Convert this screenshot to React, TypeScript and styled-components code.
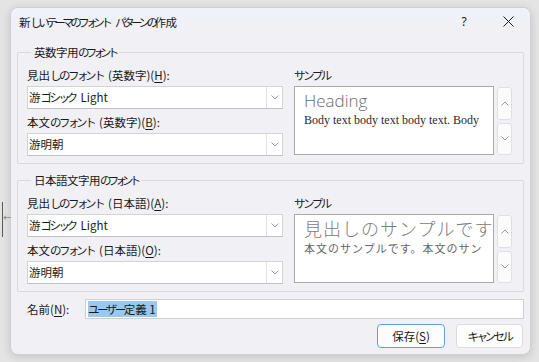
import React from 'react';
import styled, { createGlobalStyle } from 'styled-components';

const Global = createGlobalStyle`
  html, body { margin: 0; padding: 0; background: #e4e4e4; }
  body {
    font-family: "Noto Sans CJK JP", "Noto Sans", sans-serif;
    font-size: 11.5px;
    color: #1b1b1b;
  }
  #root { width: 539px; height: 362px; position: relative; overflow: hidden; }
`;

const SMALL = 'ぁぃぅぇぉっゃゅょゎァィゥェォッャュョヮ';
const KANA_RUN = /([\u3040-\u30ff]+)/;
const IS_KANA = /^[\u3040-\u30ff]+$/;

const Kana = styled.span<{ $small?: boolean; $last?: boolean }>`
  letter-spacing: ${(p) =>
    p.$last ? '0' : p.$small ? 'var(--kana-small, -3.5px)' : 'var(--kana, -2.5px)'};
`;

const J: React.FC<{ t: string }> = ({ t }) => {
  const parts = t.split(KANA_RUN).filter((s) => s.length > 0);
  return (
    <>
      {parts.map((part, i) => {
        if (!IS_KANA.test(part)) return <React.Fragment key={i}>{part}</React.Fragment>;
        const chars = Array.from(part);
        const next = parts[i + 1];
        const beforeGap = next !== undefined && /^[\s(]/.test(next);
        return chars.map((c, j) => (
          <Kana
            key={`${i}-${j}`}
            $small={SMALL.includes(c)}
            $last={beforeGap && j === chars.length - 1}
          >
            {c}
          </Kana>
        ));
      })}
    </>
  );
};

const Page = styled.div`
  width: 539px;
  height: 362px;
  box-sizing: border-box;
  padding: 7px 0 0 10px;
  position: relative;
`;

const EdgeGadget = styled.div`
  position: absolute;
  left: 0;
  top: 180px;
  width: 9px;
  height: 60px;
`;

const EdgeLine = styled.div`
  position: absolute;
  left: 2px;
  top: 22px;
  width: 1px;
  height: 35px;
  background: #5a5a5a;
`;

const EdgeArrow = styled.div`
  position: absolute;
  left: 3px;
  top: 32px;
  font-size: 10px;
  line-height: 12px;
  color: #8a8a8a;
  font-family: "DejaVu Sans", sans-serif;
`;

const Window = styled.div`
  width: 521px;
  height: 348px;
  box-sizing: border-box;
  border: 1px solid #cfcfcf;
  border-radius: 8px;
  background: #f1f0f5;
  box-shadow: 0 2px 10px rgba(0, 0, 0, 0.14);
  display: flex;
  flex-direction: column;
  overflow: hidden;
`;

const TitleBar = styled.div`
  height: 27px;
  display: flex;
  align-items: center;
  padding-left: 8px;
  background: linear-gradient(180deg, #eff2fa 0%, #f1f0f5 100%);
`;

const TitleText = styled.div`
  flex: 1;
  font-size: 11.5px;
  line-height: 16px;
  color: #1a1a1a;
  letter-spacing: -0.3px;
  --kana: -3.5px;
  --kana-small: -4.5px;
`;

const CaptionButton = styled.div`
  width: 44px;
  height: 26px;
  display: flex;
  align-items: center;
  justify-content: center;
  color: #1a1a1a;
  font-family: "Noto Sans", sans-serif;
  font-size: 12px;
`;

const Body = styled.div`
  flex: 1;
  display: flex;
  flex-direction: column;
  padding: 9px 6px 0 6px;
`;

const Group = styled.fieldset<{ $top?: number }>`
  margin: ${(p) => p.$top ?? 0}px 0 0 0;
  padding: 0 11px 7px 9px;
  border: 1px solid #dadada;
  border-radius: 2px;
  min-width: 0;
`;

const Legend = styled.legend`
  margin-left: 4px;
  padding: 0 3px;
  font-size: 11.5px;
  line-height: 16px;
  color: #1a1a1a;
  letter-spacing: -0.5px;
  --kana: -3.8px;
  --kana-small: -4.8px;
`;

const GroupGrid = styled.div`
  display: grid;
  grid-template-columns: 256px 1fr;
  column-gap: 11px;
`;

const Column = styled.div`
  display: flex;
  flex-direction: column;
`;

const FieldLabel = styled.div<{ $gap: number }>`
  margin-top: ${(p) => p.$gap}px;
  height: 18px;
  line-height: 18px;
  font-size: 11.5px;
  color: #1a1a1a;
  white-space: nowrap;
`;

const Key = styled.span`
  text-decoration: underline;
  text-underline-offset: 2px;
`;

const Combo = styled.div`
  margin-top: 2px;
  height: 23px;
  box-sizing: border-box;
  border: 1px solid #d4d4d4;
  border-bottom-color: #c2c2c2;
  background: #ffffff;
  display: flex;
  align-items: stretch;
`;

const ComboText = styled.div`
  flex: 1;
  padding-left: 1px;
  line-height: 21px;
  font-size: 11.5px;
  color: #1a1a1a;
  white-space: nowrap;
  overflow: hidden;
`;

const ComboArrow = styled.div`
  width: 15px;
  border-left: 1px solid #e2e2e2;
  display: flex;
  align-items: center;
  justify-content: center;
`;

const SampleRow = styled.div`
  margin-top: 2px;
  display: flex;
  gap: 3px;
  height: 69px;
`;

const SampleBox = styled.div`
  width: 200px;
  box-sizing: border-box;
  border: 1px solid #a9a9a9;
  background: #ffffff;
  padding: 3px 0 0 9px;
  overflow: hidden;
  white-space: nowrap;
`;

const SampleHeading = styled.div<{ $jp?: boolean }>`
  font-family: ${(p) =>
    p.$jp ? '"Noto Sans CJK JP", sans-serif' : '"Open Sans", "Noto Sans", sans-serif'};
  font-weight: 300;
  font-size: ${(p) => (p.$jp ? 18 : 17)}px;
  line-height: ${(p) => (p.$jp ? 21 : 22)}px;
  color: ${(p) => (p.$jp ? '#7c7c7c' : '#6c6c6c')};
  letter-spacing: ${(p) => (p.$jp ? '1px' : '0')};
`;

const SampleBody = styled.div<{ $jp?: boolean }>`
  font-family: ${(p) =>
    p.$jp ? '"Noto Sans CJK JP", sans-serif' : '"Liberation Serif", serif'};
  font-size: ${(p) => (p.$jp ? 11 : 12)}px;
  line-height: 16px;
  margin-top: ${(p) => (p.$jp ? 1 : 0)}px;
  color: ${(p) => (p.$jp ? '#666666' : '#2b2b2b')};
  letter-spacing: ${(p) => (p.$jp ? '1px' : '0')};
`;

const Spin = styled.div`
  width: 15px;
  padding-top: 1px;
  display: flex;
  flex-direction: column;
  gap: 3px;
`;

const SpinButton = styled.div`
  flex: 1;
  box-sizing: border-box;
  border: 1px solid #e0e0e0;
  border-radius: 3px;
  background: #fbfbfb;
  display: flex;
  align-items: center;
  justify-content: center;
`;

const NameRow = styled.div`
  margin-top: 7px;
  display: flex;
  align-items: center;
  padding-left: 10px;
  height: 20px;
`;

const NameLabel = styled.div`
  width: 58px;
  font-size: 11.5px;
  line-height: 20px;
  color: #1a1a1a;
`;

const NameInput = styled.div`
  flex: 1;
  height: 20px;
  box-sizing: border-box;
  border: 1px solid #cfcfcf;
  background: #ffffff;
  padding: 1px 0 1px 2px;
  display: flex;
`;

const Selection = styled.span`
  background: #99c9ef;
  color: #1a1a1a;
  line-height: 17px;
  font-size: 11.5px;
  padding-right: 1px;
`;

const ButtonRow = styled.div`
  margin-top: 5px;
  display: flex;
  justify-content: flex-end;
  gap: 11px;
  padding-right: 1px;
`;

const Button = styled.div<{ $primary?: boolean; $w: number }>`
  width: ${(p) => p.$w}px;
  height: 24px;
  box-sizing: border-box;
  border: 1px solid ${(p) => (p.$primary ? '#5ea0e0' : '#dcdcdc')};
  border-radius: 4px;
  background: #fdfdfd;
  display: flex;
  align-items: center;
  justify-content: center;
  font-size: 11.5px;
  color: #1a1a1a;
`;

const Chevron: React.FC<{ up?: boolean }> = ({ up }) => (
  <svg width="8" height="5" viewBox="0 0 8 5">
    <path
      d={up ? 'M0.5 4.5 L4 1 L7.5 4.5' : 'M0.5 0.5 L4 4 L7.5 0.5'}
      fill="none"
      stroke="#8a8a8a"
      strokeWidth="0.9"
    />
  </svg>
);

const CloseIcon = () => (
  <svg width="11" height="11" viewBox="0 0 11 11">
    <path d="M0.5 0.5 L10.5 10.5 M10.5 0.5 L0.5 10.5" stroke="#1a1a1a" strokeWidth="1" />
  </svg>
);

type FontGroupProps = {
  legend: string;
  headLabel: string;
  headKey: string;
  bodyLabel: string;
  bodyKey: string;
  headFont: string;
  bodyFont: string;
  sampleHead: string;
  sampleBody: string;
  jp?: boolean;
  top?: number;
};

const FontGroup: React.FC<FontGroupProps> = (p) => (
  <Group $top={p.top}>
    <Legend>
      <J t={p.legend} />
    </Legend>
    <GroupGrid>
      <Column>
        <FieldLabel $gap={6}>
          <J t={p.headLabel} />(<Key>{p.headKey}</Key>):
        </FieldLabel>
        <Combo>
          <ComboText>
            <J t={p.headFont} />
          </ComboText>
          <ComboArrow>
            <Chevron />
          </ComboArrow>
        </Combo>
        <FieldLabel $gap={4}>
          <J t={p.bodyLabel} />(<Key>{p.bodyKey}</Key>):
        </FieldLabel>
        <Combo>
          <ComboText>
            <J t={p.bodyFont} />
          </ComboText>
          <ComboArrow>
            <Chevron />
          </ComboArrow>
        </Combo>
      </Column>
      <Column>
        <FieldLabel $gap={6}>
          <J t="サンプル" />
        </FieldLabel>
        <SampleRow>
          <SampleBox>
            <SampleHeading $jp={p.jp}>{p.sampleHead}</SampleHeading>
            <SampleBody $jp={p.jp}>{p.sampleBody}</SampleBody>
          </SampleBox>
          <Spin>
            <SpinButton>
              <Chevron up />
            </SpinButton>
            <SpinButton>
              <Chevron />
            </SpinButton>
          </Spin>
        </SampleRow>
      </Column>
    </GroupGrid>
  </Group>
);

export default function App() {
  return (
    <>
      <Global />
      <Page>
        <EdgeGadget>
          <EdgeLine />
          <EdgeArrow>←</EdgeArrow>
        </EdgeGadget>
        <Window>
          <TitleBar>
            <TitleText>
              <J t="新しいテーマのフォント パターンの作成" />
            </TitleText>
            <CaptionButton>?</CaptionButton>
            <CaptionButton>
              <CloseIcon />
            </CaptionButton>
          </TitleBar>
          <Body>
            <FontGroup
              legend="英数字用のフォント"
              headLabel="見出しのフォント (英数字)"
              headKey="H"
              bodyLabel="本文のフォント (英数字)"
              bodyKey="B"
              headFont="游ゴシック Light"
              bodyFont="游明朝"
              sampleHead="Heading"
              sampleBody="Body text body text body text. Body"
            />
            <FontGroup
              top={8}
              legend="日本語文字用のフォント"
              headLabel="見出しのフォント (日本語)"
              headKey="A"
              bodyLabel="本文のフォント (日本語)"
              bodyKey="O"
              headFont="游ゴシック Light"
              bodyFont="游明朝"
              sampleHead="見出しのサンプルです"
              sampleBody="本文のサンプルです。本文のサン"
              jp
            />
            <NameRow>
              <NameLabel>
                名前(<Key>N</Key>):
              </NameLabel>
              <NameInput>
                <Selection>
                  <J t="ユーザー定義 1" />
                </Selection>
              </NameInput>
            </NameRow>
            <ButtonRow>
              <Button $primary $w={68}>
                保存(<Key>S</Key>)
              </Button>
              <Button $w={67}>
                <J t="キャンセル" />
              </Button>
            </ButtonRow>
          </Body>
        </Window>
      </Page>
    </>
  );
}
